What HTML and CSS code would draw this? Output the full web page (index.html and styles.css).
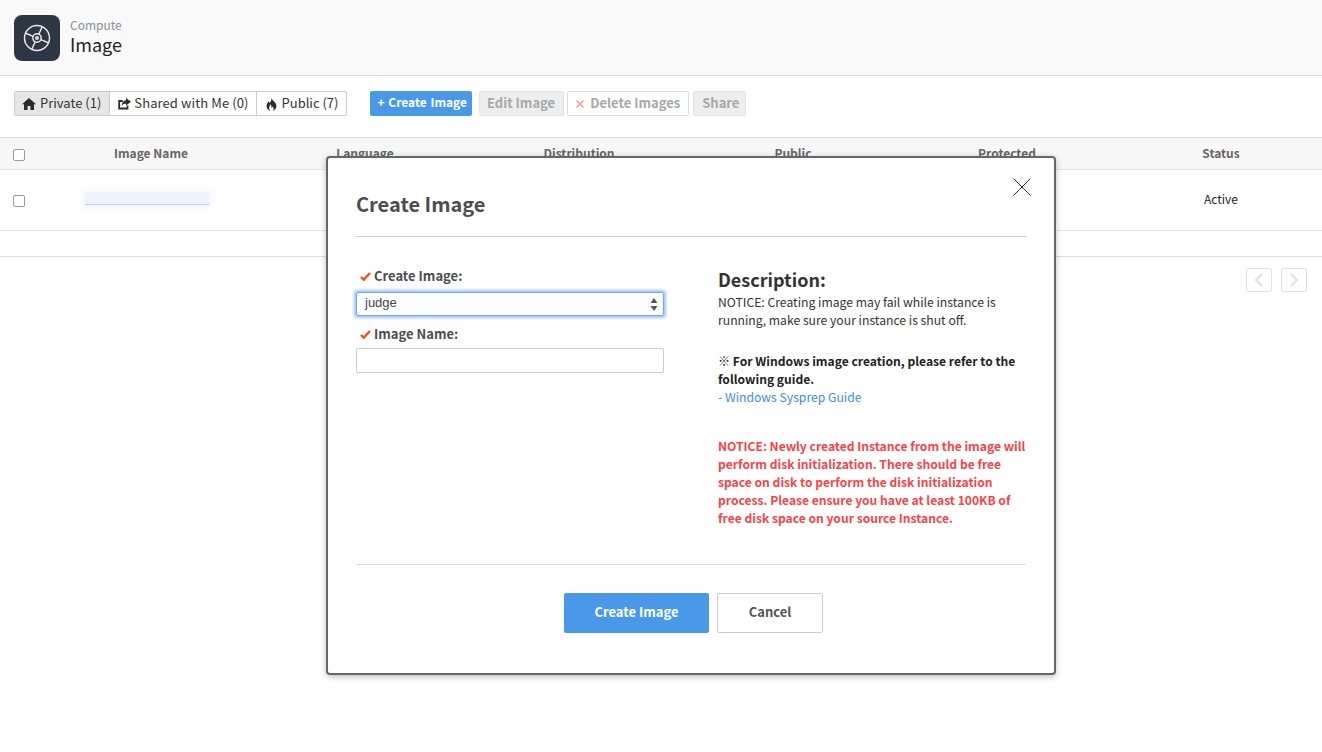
FILE: index.html
```html
<!DOCTYPE html>
<html lang="en">
<head>
    <meta charset="UTF-8">
    <title>Image</title>
    <link rel="stylesheet" href="styles.css">
</head>
<body>

<!-- Page header -->
<div class="page-head">
    <div class="head-icon">
        <svg width="40" height="40" viewBox="0 0 40 40" fill="none" stroke="#e6e8eb" stroke-width="1.5">
            <circle cx="20" cy="20" r="12.5"/>
            <circle cx="20" cy="20" r="4.2"/>
            <circle cx="20" cy="20" r="1.3"/>
            <path d="M8.800 15.200 16.200 18.400M23.800 21.600 31.200 24.800M25.200 8.800 21.800 16.200M18.200 23.800 14.800 31.200"/>
        </svg>
    </div>
    <div class="head-text">
        <div class="head-sub">Compute</div>
        <div class="head-title">Image</div>
    </div>
</div>

<!-- Toolbar -->
<div class="toolbar">
    <div class="tabs">
        <a class="tab tab-active">
            <svg width="14" height="12" viewBox="0 0 14 12"><path fill="#2b2b2b" d="M7 0 0 6.300h2V12h3.600V8h2.800v4H12V6.300h2z"/></svg>
            Private (1)
        </a>
        <a class="tab tab-shared">
            <svg width="13" height="12" viewBox="0 0 13 12"><path fill="none" stroke="#2b2b2b" stroke-width="1.800" d="M9.500 7.500v3H1.200V3h3.600"/><path fill="#2b2b2b" d="M8 0l5 3.800L8 7.600V5.400C6 5.400 4.600 6.200 3.600 8 3.800 5 5.500 2.600 8 2.300z"/></svg>
            Shared with Me (0)
        </a>
        <a class="tab">
            <svg width="13" height="13" viewBox="-1 0 13 13"><path fill="#2b2b2b" d="M5.500 0c.6 2.300 3.200 3.400 4.500 6 1.300 3-.6 6.300-3.300 7 1.200-1.400 1.300-3 .1-4.600-.4 1-1 1.300-1.500 1.300.4-1.400 0-2.600-1.100-3.500.2 1.500-1.700 2.800-.9 5 .2.700.5 1.300 1 1.800C2.300 12.400.3 10.300.6 7.500.8 5.800 2 5 2.200 3.300c.7.400 1.100 1 1.200 1.700C4.700 4 5.700 2.200 5.500 0z"/></svg>
            Public (7)
        </a>
    </div>
    <div class="actions">
        <a class="btn btn-primary">+ Create Image</a>
        <a class="btn btn-disabled btn-edit">Edit Image</a>
        <a class="btn btn-outline"><svg class="x-mark" width="8" height="8" viewBox="0 0 8 8"><path fill="none" stroke="#f09a9a" stroke-width="1.500" d="M.5.5l7 7M7.500.5l-7 7"/></svg>Delete Images</a>
        <a class="btn btn-disabled btn-share">Share</a>
    </div>
</div>

<!-- Image table -->
<table class="image-table">
    <thead>
        <tr>
            <th class="col-check"><span class="check"></span></th>
            <th class="col-mid">Image Name</th>
            <th class="col-mid">Language</th>
            <th class="col-mid">Distribution</th>
            <th class="col-mid">Public</th>
            <th class="col-mid">Protected</th>
            <th class="col-status">Status</th>
        </tr>
    </thead>
    <tbody>
        <tr class="row-image">
            <td class="col-check"><span class="check"></span></td>
            <td class="col-mid"><span class="blurred-link"></span></td>
            <td></td>
            <td></td>
            <td></td>
            <td></td>
            <td class="col-status">Active</td>
        </tr>
        <tr class="row-empty">
            <td colspan="7"></td>
        </tr>
    </tbody>
</table>

<div class="pager">
    <a class="page-btn"><svg width="10" height="14" viewBox="0 0 10 14"><path fill="none" stroke="#e0e0e0" stroke-width="2" d="M8 1 2 7l6 6"/></svg></a>
    <a class="page-btn"><svg width="10" height="14" viewBox="0 0 10 14"><path fill="none" stroke="#e0e0e0" stroke-width="2" d="M2 1l6 6-6 6"/></svg></a>
</div>

<!-- Create image dialog -->
<div class="modal">
    <svg class="modal-close" width="18" height="18" viewBox="0 0 18 18"><path fill="none" stroke="#333" stroke-width="1" d="M.5.5l17 17M17.500.5l-17 17"/></svg>
    <h2 class="modal-title">Create Image</h2>
    <div class="modal-body">
        <div class="form-col">
            <label class="field-label"><svg class="tick" width="11" height="9" viewBox="0 0 11 9"><path fill="none" stroke="#f04e1e" stroke-width="2.400" d="M1 5l2.700 2.700L10 1"/></svg>Create Image:</label>
            <div class="select-box">
                <span>judge</span>
                <svg width="8" height="13" viewBox="0 0 8 13"><path fill="#555" d="M4 0l3.500 5H.5zM4 13 .5 8h7z"/></svg>
            </div>
            <label class="field-label label-second"><svg class="tick" width="11" height="9" viewBox="0 0 11 9"><path fill="none" stroke="#f04e1e" stroke-width="2.400" d="M1 5l2.700 2.700L10 1"/></svg>Image Name:</label>
            <input class="text-input" type="text">
        </div>
        <div class="desc-col">
            <h3 class="desc-title">Description:</h3>
            <p class="desc-text">NOTICE: Creating image may fail while instance is running, make sure your instance is shut off.</p>
            <p class="desc-bold">&#8251; For Windows image creation, please refer to the following guide.</p>
            <a class="desc-link">- Windows Sysprep Guide</a>
            <p class="desc-warn">NOTICE: Newly created Instance from the image will perform disk initialization. There should be free space on disk to perform the disk initialization process. Please ensure you have at least 100KB of free disk space on your source Instance.</p>
        </div>
    </div>
    <div class="modal-foot">
        <a class="foot-btn foot-primary">Create Image</a>
        <a class="foot-btn foot-cancel">Cancel</a>
    </div>
</div>

</body>
</html>
```

FILE: styles.css
```css
html, body {
    height: 100%;
}
body {
    margin: 0;
    padding: 0;
    background: #fff;
    color: #222;
    font-family: "Noto Sans CJK KR", "Noto Sans", sans-serif;
    font-size: 13px;
    overflow: hidden;
    position: relative;
}

/* header */
.page-head {
    height: 75px;
    background: #f9f9f9;
    border-bottom: 1px solid #ddd;
    display: flex;
    align-items: center;
    padding-left: 14px;
}
.head-icon {
    width: 46px;
    height: 46px;
    border-radius: 8px;
    background: #2d3644;
    display: flex;
    align-items: center;
    justify-content: center;
}
.head-text {
    margin-left: 10px;
    padding-bottom: 4px;
}
.head-sub {
    font-size: 12px;
    line-height: 17px;
    color: #8a8f99;
}
.head-title {
    font-size: 18px;
    line-height: 22px;
    color: #222;
}

/* toolbar */
.toolbar {
    height: 55px;
    display: flex;
    align-items: center;
    padding-left: 14px;
    box-sizing: border-box;
}
.tabs {
    display: flex;
    border: 1px solid #ccc;
    border-radius: 2px;
    height: 23px;
    line-height: 20px;
}
.tab {
    display: flex;
    align-items: center;
    gap: 4px;
    padding: 0 8px 2px;
    color: #333;
    border-left: 1px solid #ccc;
}
.tab svg {
    margin-top: 3px;
}
.tab:first-child {
    border-left: 0;
    padding-left: 7px;
}
.tab-shared {
    gap: 3px;
    padding-right: 7px;
    letter-spacing: .1px;
}
.tab-active {
    background: #e6e6e6;
}
.actions {
    display: flex;
    gap: 3px;
    margin-left: 23px;
}
.btn {
    height: 25px;
    line-height: 22px;
    box-sizing: border-box;
    padding: 0 8px;
    font-weight: 700;
    border-radius: 2px;
}
.btn-primary {
    background: #4a98e8;
    color: #fff;
    padding: 0 5px 0 7px;
    font-size: 12px;
    word-spacing: 1px;
}
.btn-edit {
    margin-left: 4px;
    padding-left: 7px;
}
.btn-share {
    margin-left: 1px;
    padding-right: 6px;
}
.btn-disabled {
    background: #eee;
    border: 1px solid #e4e4e4;
    color: #a8a8a8;
}
.btn-outline {
    background: #fff;
    border: 1px solid #ddd;
    color: #a8a8a8;
}
.x-mark {
    margin-right: 6px;
}

/* table */
.image-table {
    width: 100%;
    margin-top: 6px;
    border-collapse: collapse;
    table-layout: fixed;
}
.image-table th {
    height: 29px;
    padding: 0 0 2px;
    background: #f7f7f7;
    border-top: 1px solid #ddd;
    border-bottom: 1px solid #e6e6e6;
    font-size: 12px;
    font-weight: 700;
    color: #666;
    text-align: center;
}
.image-table td {
    padding: 0;
    text-align: center;
    font-size: 12px;
    color: #222;
}
.col-check {
    width: 44px;
}
.col-mid {
    width: 214px;
}
.image-table th.col-status {
    padding-left: 6px;
}
.image-table td.col-status {
    height: 57px;
    padding: 0 0 3px 6px;
}
.check {
    display: block;
    width: 10px;
    height: 10px;
    margin: 1px 0 0 13px;
    border: 1px solid #999;
    border-radius: 2px;
    background: #fff;
}
th .check {
    margin-top: 4px;
}
.row-image td {
    height: 60px;
    border-bottom: 1px solid #e4e4e4;
}
.row-empty td {
    height: 25px;
    border-bottom: 1px solid #ddd;
}
.blurred-link {
    display: block;
    width: 124px;
    height: 11px;
    margin: 0 0 2px 41px;
    background: #eef4fd;
    border-bottom: 1px solid #bcd3f3;
    box-shadow: 0 0 7px 3px #f1f6fd;
}

/* pager */
.pager {
    display: flex;
    justify-content: flex-end;
    gap: 9px;
    padding: 11px 15px 0 0;
}
.page-btn {
    width: 24px;
    height: 22px;
    border: 1px solid #e0e0e0;
    border-radius: 2px;
    display: flex;
    align-items: center;
    justify-content: center;
}

/* dialog */
.modal {
    position: absolute;
    left: 326px;
    top: 156px;
    box-sizing: border-box;
    width: 730px;
    height: 519px;
    padding: 0 28px;
    background: #fff;
    border: 2px solid #666;
    border-radius: 4px;
    box-shadow: 0 2px 6px rgba(0, 0, 0, 0.25);
}
.modal-close {
    position: absolute;
    right: 23px;
    top: 20px;
}
.modal-title {
    margin: 0;
    height: 78px;
    line-height: 92px;
    font-size: 20px;
    font-weight: 700;
    color: #4d4d4d;
    border-bottom: 1px solid #ccc;
}
.modal-body {
    display: flex;
    height: 327px;
    border-bottom: 1px solid #ddd;
}
.form-col {
    flex: none;
    width: 308px;
    padding-top: 28px;
}
.field-label {
    display: block;
    height: 21px;
    line-height: 21px;
    padding-left: 4px;
    font-weight: 700;
    color: #4d4d4d;
}
.label-second {
    margin-top: 7px;
}
.tick {
    margin-right: 3px;
}
.select-box {
    box-sizing: border-box;
    height: 24px;
    margin-top: 6px;
    display: flex;
    align-items: center;
    justify-content: space-between;
    padding: 0 5px 4px 8px;
    border: 1px solid #6aa8ee;
    border-radius: 2px;
    box-shadow: 0 0 3px 2px #9cc5f5;
    font-family: "Liberation Sans", Arial, sans-serif;
    font-size: 13px;
    color: #444;
}
.select-box svg {
    margin-top: 4px;
}
.text-input {
    display: block;
    box-sizing: border-box;
    width: 100%;
    height: 25px;
    margin-top: 4px;
    border: 1px solid #ccc;
    border-radius: 2px;
    background: #fff;
}
.desc-col {
    flex: none;
    width: 309px;
    margin-left: 54px;
    padding-top: 31px;
    font-size: 12.2px;
    line-height: 18px;
}
.desc-title {
    margin: 0 0 3px;
    font-size: 18px;
    line-height: 22px;
    font-weight: 700;
    color: #333;
}
.desc-text {
    margin: 0 0 23px;
    color: #333;
}
.desc-bold {
    margin: 0;
    font-size: 12.1px;
    font-weight: 700;
    color: #222;
}
.desc-link {
    display: block;
    color: #3b8fd6;
}
.desc-warn {
    margin: 31px 0 0;
    font-size: 12.1px;
    font-weight: 700;
    color: #f8434a;
}
.modal-foot {
    display: flex;
    justify-content: center;
    gap: 8px;
    padding-top: 28px;
    padding-left: 5px;
}
.foot-btn {
    box-sizing: border-box;
    height: 40px;
    line-height: 37px;
    text-align: center;
    font-weight: 700;
    border-radius: 2px;
}
.foot-primary {
    width: 145px;
    background: #4a98e8;
    color: #fff;
}
.foot-cancel {
    width: 106px;
    line-height: 35px;
    background: #fff;
    border: 1px solid #ccc;
    color: #555;
}
```
